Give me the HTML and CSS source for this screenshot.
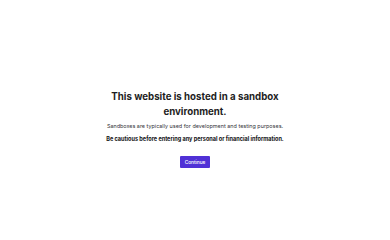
FILE: index.html
```html
<!DOCTYPE html>
<html lang="en">
<head>
<meta charset="utf-8">
<title>Sandbox</title>
<link rel="stylesheet" href="styles.css">
</head>
<body>
<main class="notice">
  <h1 class="notice-title">This website is hosted in a sandbox environment.</h1>
  <p class="notice-text">Sandboxes are typically used for development and testing purposes.</p>
  <p class="notice-warn">Be cautious before entering any personal or financial information.</p>
  <button class="notice-btn" type="button">Continue</button>
</main>
</body>
</html>
```

FILE: styles.css
```css
html, body {
  margin: 0;
  padding: 0;
  background: #ffffff;
}
body {
  width: 390px;
  height: 240px;
  font-family: "Inter", "DejaVu Sans", sans-serif;
  color: #1f1f24;
}
.notice {
  display: flex;
  flex-direction: column;
  align-items: center;
  padding-top: 89px;
  text-align: center;
}
.notice-title {
  margin: 0;
  width: 200px;
  font-size: 9.7px;
  line-height: 15px;
  font-weight: 700;
  color: #1e1e23;
}
.notice-text {
  margin: 3px 0 0;
  font-size: 5.45px;
  line-height: 9px;
  color: #333338;
}
.notice-warn {
  margin: 4px 0 0;
  font-size: 5.55px;
  line-height: 9px;
  font-weight: 700;
  color: #111114;
}
.notice-btn {
  margin-top: 12px;
  width: 30px;
  height: 12px;
  padding: 0;
  border: none;
  border-radius: 1px;
  background: #5031d6;
  color: #ffffff;
  font-family: inherit;
  font-size: 4.8px;
  font-weight: 500;
}
```
